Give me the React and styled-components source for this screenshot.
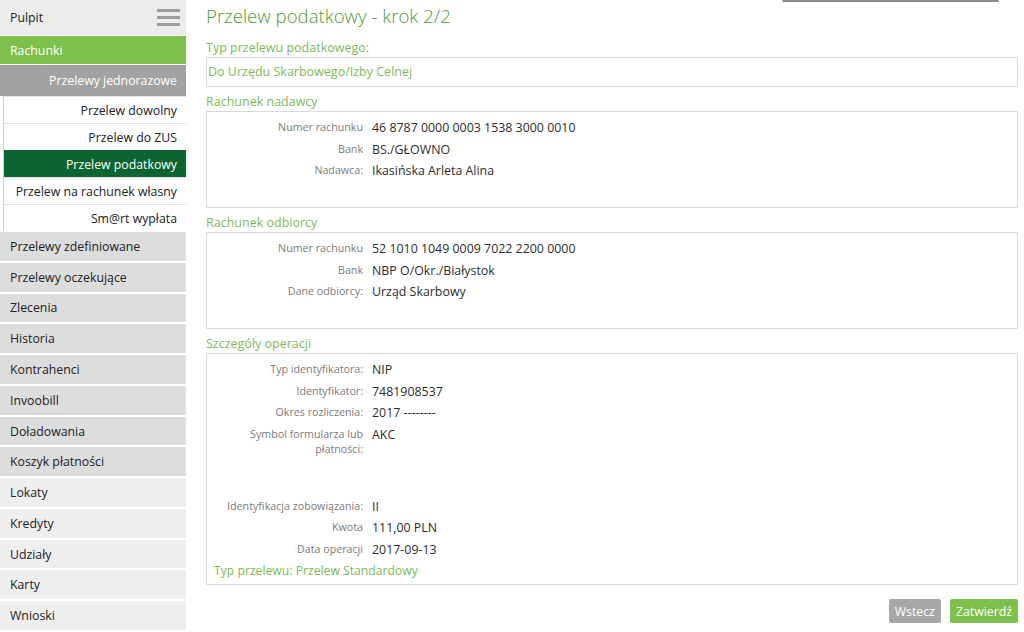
import React from "react";
import styled, { createGlobalStyle } from "styled-components";

const Global = createGlobalStyle`
  html, body { margin: 0; padding: 0; background: #fff; }
  body { font-family: "Open Sans", "Noto Sans", sans-serif; color: #333; }
  * { box-sizing: border-box; }
`;

const Page = styled.div`
  display: flex;
  width: 1024px;
  height: 632px;
  overflow: hidden;
`;

const Sidebar = styled.nav`
  width: 186px;
  flex: none;
  display: flex;
  flex-direction: column;
  font-size: 12.3px;
`;

const TopItem = styled.div`
  height: 35px;
  background: #ececec;
  display: flex;
  align-items: center;
  justify-content: space-between;
  padding: 0 6px 0 10px;
  color: #222;
  margin-bottom: 1px;
`;

const Hamburger = styled.span`
  display: flex;
  flex-direction: column;
  gap: 4px;
  width: 23px;
  span { height: 3px; background: #9d9d9d; }
`;

const ActiveSection = styled.div`
  height: 29px;
  background: #7dc04b;
  color: #fff;
  display: flex;
  align-items: center;
  padding-left: 10px;
  margin-bottom: 1px;
`;

const SubHeader = styled.div`
  height: 31px;
  background: #a2a2a2;
  color: #fff;
  display: flex;
  align-items: center;
  justify-content: flex-end;
  padding-right: 9px;
`;

const SubList = styled.div`
  margin-left: 3px;
  border-left: 1px solid #cfcfcf;
  display: flex;
  flex-direction: column;
  margin-bottom: 1px;
`;

const SubItem = styled.div`
  height: 27px;
  display: flex;
  align-items: center;
  justify-content: flex-end;
  padding-right: 9px;
  border-top: 1px solid #e2e2e2;
  white-space: nowrap;
  background: ${(p) => (p.$active ? "#0c6430" : "#fff")};
  color: ${(p) => (p.$active ? "#fff" : "#222")};
  border-top-color: ${(p) => (p.$active ? "#0c6430" : "#e2e2e2")};
`;

const MenuItem = styled.div`
  height: 28.77px;
  margin-bottom: 2px;
  background: ${(p) => (p.$light ? "#eeeeee" : "#dddddd")};
  display: flex;
  align-items: center;
  padding-left: 10px;
  color: #222;
  flex: none;
`;

const Main = styled.main`
  position: relative;
  flex: 1;
  padding: 0 6px 0 20px;
  display: flex;
  flex-direction: column;
`;

const TopDropdown = styled.div`
  position: absolute;
  top: -20px;
  left: 596px;
  width: 217px;
  height: 22px;
  border: 1px solid #e4e4e4;
  border-bottom: 2px solid #8a8a8a;
`;

const Title = styled.h1`
  margin: 0 0 7px;
  font-size: 18.6px;
  font-weight: 300;
  line-height: 32px;
  color: #4f9a35;
`;

const SectionLabel = styled.div`
  font-size: 12.5px;
  line-height: 18px;
  color: #7dbb55;
  margin-top: ${(p) => (p.$first ? "0" : "6px")};
`;

const Box = styled.div`
  border: 1px solid #d9d9d9;
  min-height: ${(p) => p.$h || "auto"};
  padding: ${(p) => p.$pad || "5px 0 0"};
`;

const PlainValue = styled.div`
  height: 28px;
  line-height: 28px;
  padding-left: 1px;
  font-size: 12.5px;
  color: #7dbb55;
`;

const Row = styled.div`
  display: grid;
  grid-template-columns: 156px 1fr;
  column-gap: 9px;
  align-items: start;
`;

const Label = styled.div`
  text-align: right;
  font-size: 10.7px;
  line-height: 15px;
  padding-top: 3px;
  color: #7b7b7b;
`;

const Value = styled.div`
  font-size: 12.4px;
  line-height: 21.5px;
  color: #2d2d2d;
`;

const Spacer = styled.div`
  height: ${(p) => p.$h};
`;

const Footnote = styled.div`
  padding-left: 7px;
  font-size: 12.2px;
  line-height: 22px;
  color: #7dbb55;
`;

const Actions = styled.div`
  display: flex;
  justify-content: flex-end;
  gap: 9px;
  margin-top: 14px;
`;

const Button = styled.button`
  height: 24px;
  padding: 0 6px;
  border: none;
  border-radius: 2px;
  font-family: inherit;
  font-size: 12.3px;
  color: #fff;
  background: ${(p) => (p.$primary ? "#7dc04b" : "#a7a7a7")};
`;

const sub = [
  "Przelew dowolny",
  "Przelew do ZUS",
  "Przelew podatkowy",
  "Przelew na rachunek własny",
  "Sm@rt wypłata",
];

const menu = [
  ["Przelewy zdefiniowane", false],
  ["Przelewy oczekujące", false],
  ["Zlecenia", false],
  ["Historia", false],
  ["Kontrahenci", false],
  ["Invoobill", false],
  ["Doładowania", false],
  ["Koszyk płatności", false],
  ["Lokaty", true],
  ["Kredyty", true],
  ["Udziały", true],
  ["Karty", true],
  ["Wnioski", true],
];

const Field = ({ label, children }) => (
  <Row>
    <Label>{label}</Label>
    <Value>{children}</Value>
  </Row>
);

export default function App() {
  return (
    <>
      <Global />
      <Page>
        <Sidebar>
          <TopItem>
            Pulpit
            <Hamburger>
              <span />
              <span />
              <span />
            </Hamburger>
          </TopItem>
          <ActiveSection>Rachunki</ActiveSection>
          <SubHeader>Przelewy jednorazowe</SubHeader>
          <SubList>
            {sub.map((s) => (
              <SubItem key={s} $active={s === "Przelew podatkowy"}>
                {s}
              </SubItem>
            ))}
          </SubList>
          {menu.map(([m, light]) => (
            <MenuItem key={m} $light={light}>
              {m}
            </MenuItem>
          ))}
        </Sidebar>
        <Main>
          <TopDropdown />
          <Title>Przelew podatkowy - krok 2/2</Title>
          <SectionLabel $first>Typ przelewu podatkowego:</SectionLabel>
          <Box $pad="0">
            <PlainValue>Do Urzędu Skarbowego/Izby Celnej</PlainValue>
          </Box>
          <SectionLabel>Rachunek nadawcy</SectionLabel>
          <Box $h="97px">
            <Field label="Numer rachunku">46 8787 0000 0003 1538 3000 0010</Field>
            <Field label="Bank">BS./GŁOWNO</Field>
            <Field label="Nadawca:">Ikasińska Arleta Alina</Field>
          </Box>
          <SectionLabel>Rachunek odbiorcy</SectionLabel>
          <Box $h="97px">
            <Field label="Numer rachunku">52 1010 1049 0009 7022 2200 0000</Field>
            <Field label="Bank">NBP O/Okr./Białystok</Field>
            <Field label="Dane odbiorcy:">Urząd Skarbowy</Field>
          </Box>
          <SectionLabel>Szczegóły operacji</SectionLabel>
          <Box $h="230px" $pad="5px 0 2px">
            <Field label="Typ identyfikatora:">NIP</Field>
            <Field label="Identyfikator:">7481908537</Field>
            <Field label="Okres rozliczenia:">2017 --------</Field>
            <Field label="Symbol formularza lub płatności:">AKC</Field>
            <Spacer $h="39px" />
            <Field label="Identyfikacja zobowiązania:">II</Field>
            <Field label="Kwota">111,00 PLN</Field>
            <Field label="Data operacji">2017-09-13</Field>
            <Footnote>Typ przelewu: Przelew Standardowy</Footnote>
          </Box>
          <Actions>
            <Button>Wstecz</Button>
            <Button $primary>Zatwierdź</Button>
          </Actions>
        </Main>
      </Page>
    </>
  );
}
